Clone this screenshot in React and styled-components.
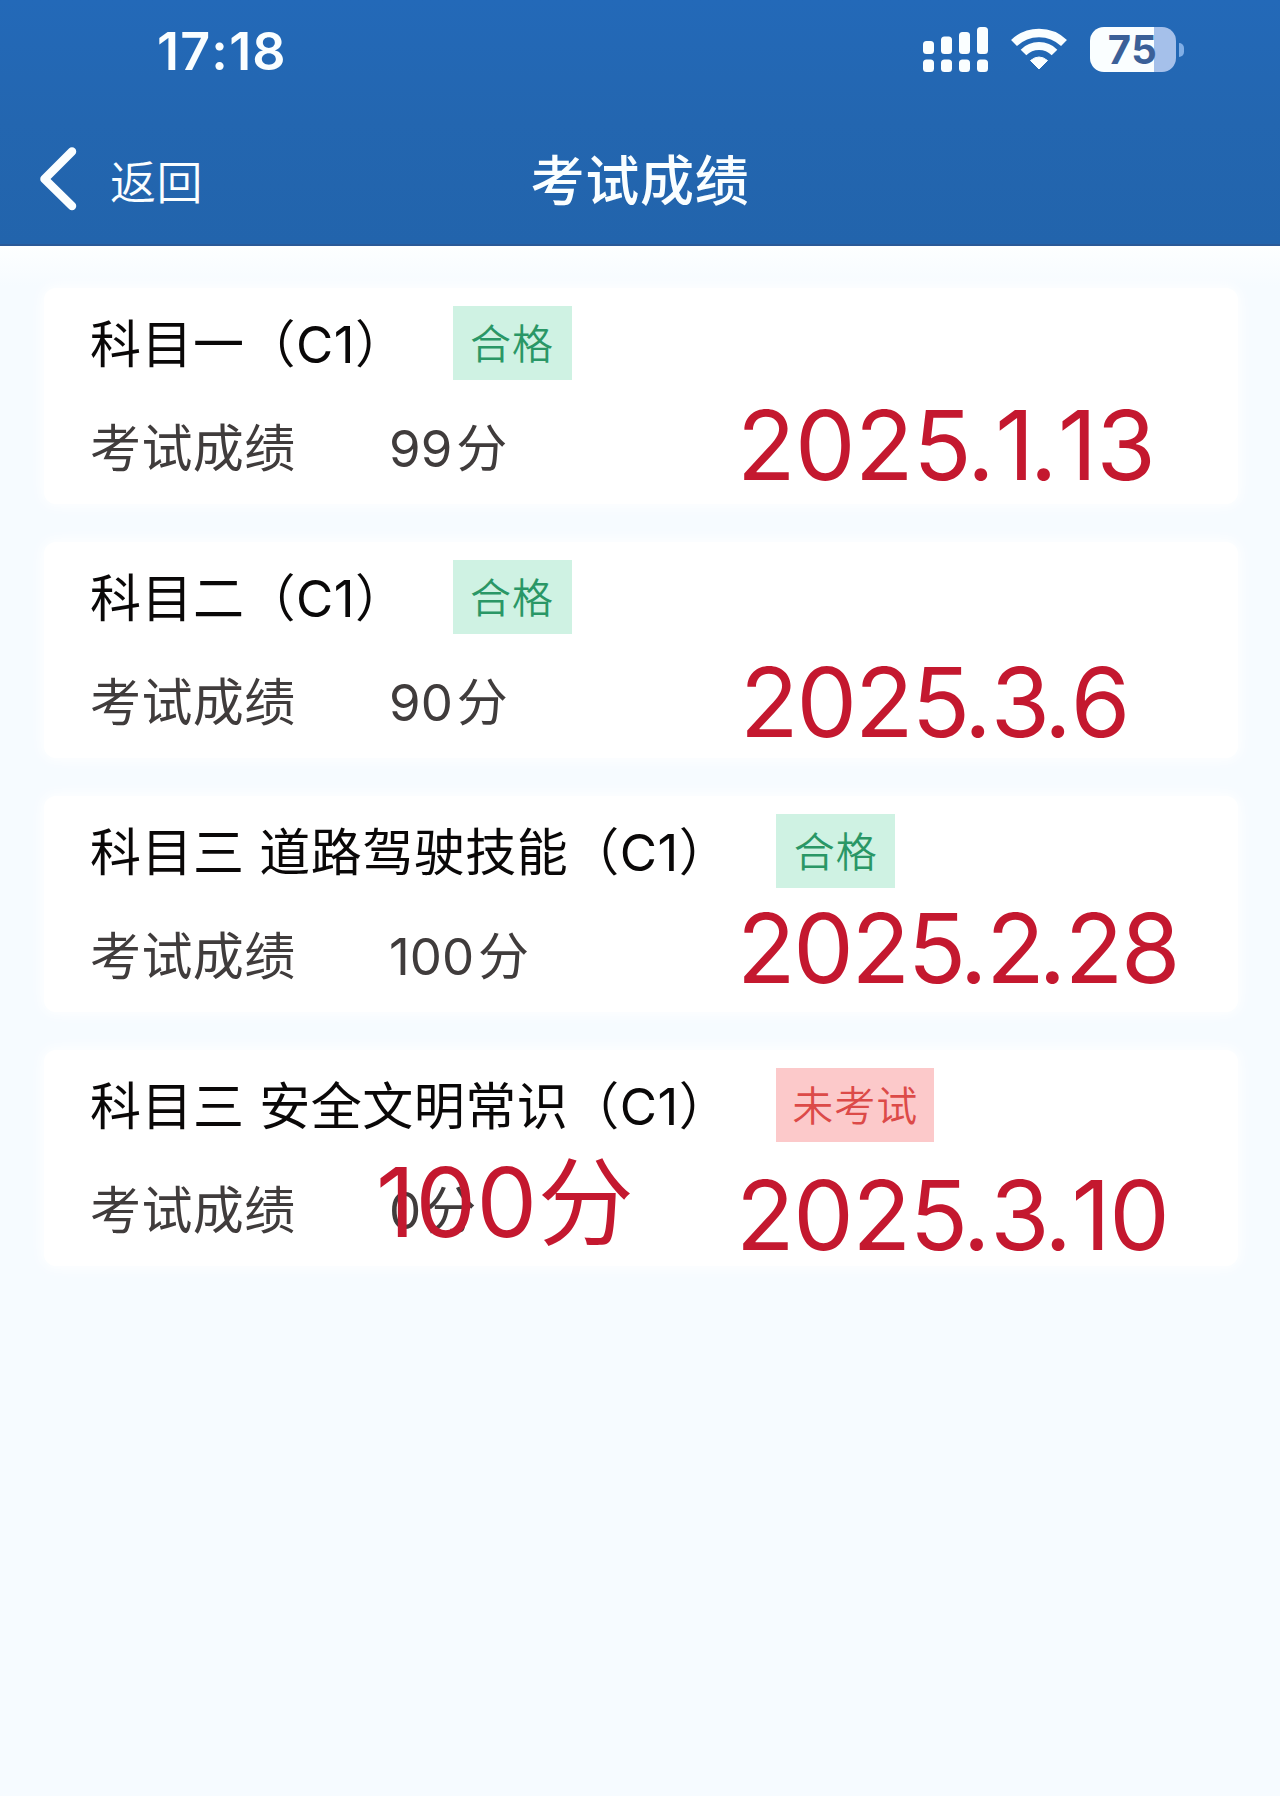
import React from 'react'
import styled, { createGlobalStyle } from 'styled-components'

const GlobalStyle = createGlobalStyle`
    * {
        box-sizing: border-box;
    }

    body {
        margin: 0;
        background: #f6fbff;
        font-family: Inter, "Noto Sans CJK SC", sans-serif;
    }
`

const Screen = styled.div`
    width: 1280px;
    min-height: 1796px;
    background: #f6fbff;
`

const Header = styled.header`
    height: 246px;
    color: #fafeff;
    background: linear-gradient(#2369b8, #2366b0 50%, #2264ac);
    border-bottom: 2px solid #2a5a98;
`

const StatusBar = styled.div`
    display: flex;
    align-items: center;
    justify-content: space-between;
    height: 99px;
    padding: 0 96px 0 157px;
`

const Clock = styled.div`
    padding-top: 5px;
    font-size: 52px;
    line-height: 60px;
    font-weight: 600;
    letter-spacing: 1.2px;
    font-kerning: none;
`

const StatusIcons = styled.div`
    display: flex;
    align-items: center;
    height: 46px;

    svg {
        display: block;
    }
`

const Signal = styled.svg`
    width: 65px;
    height: 46px;
    margin-right: 22px;
`

const Wifi = styled.svg`
    width: 58px;
    height: 46px;
    margin-right: 22px;
`

const Battery = styled.div`
    width: 86px;
    height: 45px;
    padding-right: 1px;
    border-radius: 14px;
    font-size: 40px;
    line-height: 46px;
    font-weight: 650;
    letter-spacing: 0.5px;
    text-align: center;
    color: #3b6098;
    background: linear-gradient(90deg, #fafeff 64px, #a5c0ea 64px);
`

const BatteryTip = styled.div`
    width: 5px;
    height: 14px;
    margin-left: 3px;
    border-radius: 0 6px 6px 0;
    background: #80aee6;
`

const NavBar = styled.div`
    display: grid;
    grid-template-columns: 1fr auto 1fr;
    align-items: center;
    height: 160px;
    padding: 0 40px;
`

const BackButton = styled.button`
    display: flex;
    align-items: center;
    gap: 33px;
    padding: 0;
    border: none;
    background: transparent;
    color: inherit;
    font-family: inherit;
    font-size: 46px;
    line-height: 60px;
    font-weight: 350;
    letter-spacing: 0.5px;

    svg {
        display: block;
    }

    span {
        padding-top: 6px;
    }
`

const PageTitle = styled.h1`
    margin: 0;
    padding-top: 5px;
    font-size: 54px;
    line-height: 70px;
    font-weight: 500;
    letter-spacing: 0.7px;
`

const CardList = styled.main`
    display: flex;
    flex-direction: column;
    gap: 38px;
    padding: 42px 42px 0 44px;
    background: linear-gradient(#fdffff, #f6fbff 40px);
`

const Card = styled.section`
    position: relative;
    height: 216px;
    padding: 18px 46px 0;
    border-radius: 12px;
    background: #fff;
    box-shadow: 0 0 14px 2px #fff;
`

const CardHead = styled.div`
    display: flex;
    align-items: center;
    height: 74px;
`

const Subject = styled.h2`
    margin: 0;
    padding-top: 3px;
    font-size: 51px;
    line-height: 74px;
    font-weight: 400;
    letter-spacing: 0.5px;
    color: #0a0808;
    white-space: pre;
`

const Badge = styled.span`
    min-width: 119px;
    height: 74px;
    margin-left: 46px;
    padding: 1px 16px 0;
    font-size: 41px;
    line-height: 74px;
    font-weight: 350;
    letter-spacing: 1px;
    text-align: center;
    color: ${({ $passed }) => ($passed ? '#2a9766' : '#dc4a48')};
    background: ${({ $passed }) => ($passed ? '#cff2e3' : '#fcc9ca')};
`

const ScoreRow = styled.div`
    display: flex;
    margin-top: 37px;
    font-size: 51px;
    line-height: 64px;
    color: #403c3c;
`

const ScoreLabel = styled.span`
    width: 299px;
    letter-spacing: 0.4px;
`

const Unit = styled.span`
    margin-left: 4px;
`

// red marks written over the card
const Note = styled.span`
    position: absolute;
    left: ${({ $x }) => $x}px;
    top: ${({ $y }) => $y}px;
    font-size: 96px;
    line-height: 100px;
    letter-spacing: ${({ $spacing }) => $spacing}px;
    font-kerning: none;
    color: #c4182f;
    white-space: nowrap;
`

const Dot = styled.span`
    margin: 0 1px 0 -4px;
`

const results = [
    {
        subject: '科目一（C1）',
        passed: true,
        status: '合格',
        score: 99,
        notes: [{ text: '2025.1.13', x: 693, y: 107, spacing: -0.5 }]
    },
    {
        subject: '科目二（C1）',
        passed: true,
        status: '合格',
        score: 90,
        notes: [{ text: '2025.3.6', x: 696, y: 110, spacing: -2 }]
    },
    {
        subject: '科目三 道路驾驶技能（C1）',
        passed: true,
        status: '合格',
        score: 100,
        notes: [{ text: '2025.2.28', x: 693, y: 102, spacing: -2.3 }]
    },
    {
        subject: '科目三 安全文明常识（C1）',
        passed: false,
        status: '未考试',
        score: 0,
        notes: [
            { text: '100分', x: 332, y: 102, spacing: 0.5 },
            { text: '2025.3.10', x: 692, y: 115, spacing: -1.3 }
        ]
    }
]

const bars = [14, 9.5, 5, 0]

const SignalIcon = () => (
    <Signal viewBox="0 0 65 46" fill="#fafeff">
        {bars.map((top, i) => (
            <React.Fragment key={top}>
                <rect x={i * 18} y={top} width="11" height={27 - top} rx="3.5"/>
                <rect x={i * 18} y="32.5" width="11" height="12.5" rx="3.5"/>
            </React.Fragment>
        ))}
    </Signal>
)

const WifiIcon = () => (
    <Wifi viewBox="0 0 58 46" fill="none" stroke="#fafeff">
        <path d="M4 16A36 36 0 0 1 54 16" strokeWidth="8.5"/>
        <path d="M13.5 25.5A22 22 0 0 1 44.5 25.5" strokeWidth="8"/>
        <path d="M29 42L20.5 33.5Q29 26.5 37.5 33.5Z" fill="#fafeff" strokeWidth="1" strokeLinejoin="round"/>
    </Wifi>
)

const ResultCard = ({ result }) => (
    <Card>
        <CardHead>
            <Subject>{result.subject}</Subject>
            <Badge $passed={result.passed}>{result.status}</Badge>
        </CardHead>
        <ScoreRow>
            <ScoreLabel>考试成绩</ScoreLabel>
            <span>{result.score}</span>
            <Unit>分</Unit>
        </ScoreRow>
        {result.notes.map((note) => (
            <Note key={note.text} $x={note.x} $y={note.y} $spacing={note.spacing}>
                {note.text.split('.').map((part, i) => (
                    <React.Fragment key={i}>
                        {i > 0 && <Dot>.</Dot>}
                        {part}
                    </React.Fragment>
                ))}
            </Note>
        ))}
    </Card>
)

const App = () => {
    return (
        <>
            <GlobalStyle/>
            <Screen>
                <Header>
                    <StatusBar>
                        <Clock>17:18</Clock>
                        <StatusIcons>
                            <SignalIcon/>
                            <WifiIcon/>
                            <Battery>75</Battery>
                            <BatteryTip/>
                        </StatusIcons>
                    </StatusBar>
                    <NavBar>
                        <BackButton>
                            <svg width="37" height="64" viewBox="0 0 37 64" fill="none" stroke="#fafeff" strokeWidth="8.5" strokeLinecap="round" strokeLinejoin="round">
                                <path d="M32 4.5L4.5 32L32 59"/>
                            </svg>
                            <span>返回</span>
                        </BackButton>
                        <PageTitle>考试成绩</PageTitle>
                    </NavBar>
                </Header>
                <CardList>
                    {results.map((result) => (
                        <ResultCard key={result.subject} result={result}/>
                    ))}
                </CardList>
            </Screen>
        </>
    )
}

export default App
